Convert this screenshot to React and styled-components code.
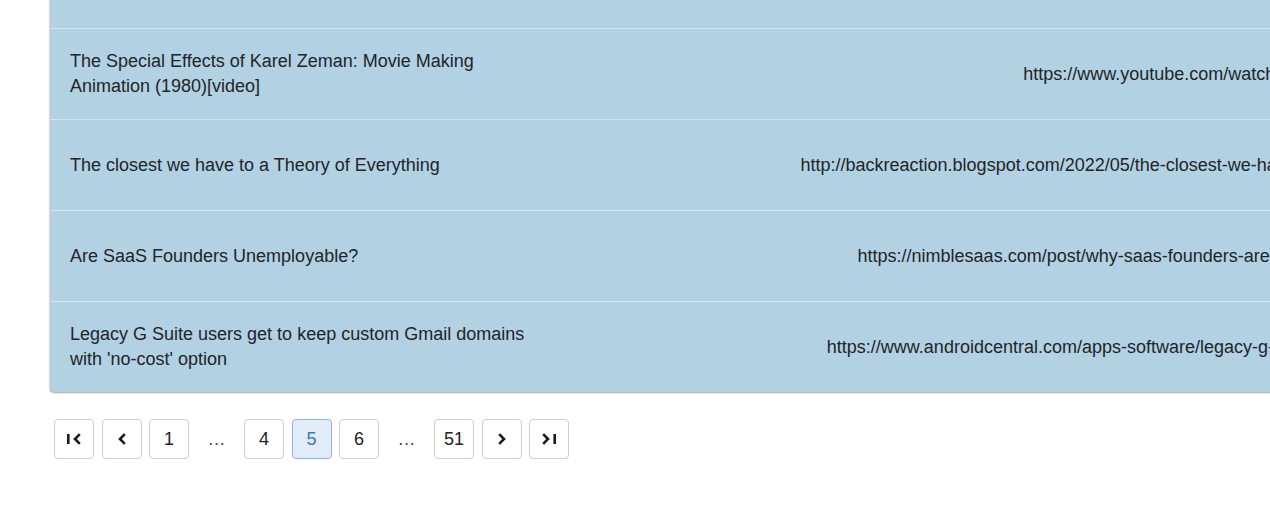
import React from "react";
import styled, { createGlobalStyle } from "styled-components";

const Global = createGlobalStyle`
  html, body { margin: 0; padding: 0; background: #ffffff; overflow: hidden; }
  body { font-family: "Liberation Sans", Arial, sans-serif; color: #212529; }
`;

const Page = styled.div`
  width: 1270px;
  height: 506px;
  overflow: hidden;
  padding-left: 50px;
  box-sizing: border-box;
`;

const Card = styled.div`
  margin-top: -62px;
  width: 1500px;
  background: #b2d1e3;
  border-radius: 4px;
  box-shadow: 0 1px 2px rgba(0, 0, 0, 0.35), -1px 0 1px rgba(0, 0, 0, 0.08);
`;

const Row = styled.div`
  display: grid;
  grid-template-columns: 500px 1000px;
  height: 90px;
  align-items: center;
  & + & { border-top: 1px solid #d6e5ef; }
`;

const Title = styled.div`
  padding: 0 20px;
  font-size: 18px;
  line-height: 25px;
`;

const Url = styled.div`
  font-size: 18px;
  line-height: 25px;
  text-align: center;
  white-space: nowrap;
  width: 1356px;
  overflow: visible;
`;

const Pager = styled.nav`
  display: flex;
  gap: 7.5px;
  margin-top: 27px;
  padding-left: 4px;
`;

const PageButton = styled.button`
  width: 40px;
  height: 40px;
  box-sizing: border-box;
  display: flex;
  align-items: center;
  justify-content: center;
  padding: 0;
  border-radius: 4px;
  border: 1px solid ${(p) => (p.$active ? "#8fb0dc" : "#cfcfcf")};
  background: ${(p) => (p.$active ? "#e2ecf8" : "#ffffff")};
  color: ${(p) => (p.$active ? "#3a74c5" : "#222222")};
  font-family: "Liberation Sans", Arial, sans-serif;
  font-size: 18px;
  cursor: pointer;
`;

const Ellipsis = styled.span`
  width: 40px;
  height: 40px;
  display: flex;
  align-items: center;
  justify-content: center;
  font-size: 18px;
  color: #444;
`;

const Icon = ({ kind }) => {
  const paths = {
    first: (
      <>
        <path d="M2.3 3v10" />
        <path d="M13.8 3.2 9 8l4.8 4.8" />
      </>
    ),
    prev: <path d="M10.8 3.2 6 8l4.8 4.8" />,
    next: <path d="M5.2 3.2 10 8l-4.8 4.8" />,
    last: (
      <>
        <path d="M2.2 3.2 7 8l-4.8 4.8" />
        <path d="M13.7 3v10" />
      </>
    ),
  };
  return (
    <svg width="16" height="16" viewBox="0 0 16 16" fill="none" stroke="#1a1a1a" strokeWidth="2.6" strokeLinecap="butt" strokeLinejoin="miter">
      {paths[kind]}
    </svg>
  );
};

const rows = [
  {
    title: "Show HN: A tiny tool for tracking reading lists",
    url: "https://github.com/example/reading-list",
  },
  {
    title: "The Special Effects of Karel Zeman: Movie Making Animation (1980)[video]",
    url: "https://www.youtube.com/watch?v=Wk5dPeQO0zU",
  },
  {
    title: "The closest we have to a Theory of Everything",
    url: "http://backreaction.blogspot.com/2022/05/the-closest-we-have-to-a-theory-of.htm?utm_source=hackernews",
  },
  {
    title: "Are SaaS Founders Unemployable?",
    url: "https://nimblesaas.com/post/why-saas-founders-are-unemployable?utm_source=hackernews",
  },
  {
    title: "Legacy G Suite users get to keep custom Gmail domains with 'no-cost' option",
    url: "https://www.androidcentral.com/apps-software/legacy-g-suite-users-can-keep-custom-gmail-domains",
  },
];

export default function App() {
  return (
    <>
      <Global />
      <Page>
        <Card>
          {rows.map((r, i) => (
            <Row key={i}>
              <Title>{r.title}</Title>
              <Url>{r.url}</Url>
            </Row>
          ))}
        </Card>
        <Pager>
          <PageButton aria-label="first"><Icon kind="first" /></PageButton>
          <PageButton aria-label="previous"><Icon kind="prev" /></PageButton>
          <PageButton>1</PageButton>
          <Ellipsis>…</Ellipsis>
          <PageButton>4</PageButton>
          <PageButton $active>5</PageButton>
          <PageButton>6</PageButton>
          <Ellipsis>…</Ellipsis>
          <PageButton>51</PageButton>
          <PageButton aria-label="next"><Icon kind="next" /></PageButton>
          <PageButton aria-label="last"><Icon kind="last" /></PageButton>
        </Pager>
      </Page>
    </>
  );
}
